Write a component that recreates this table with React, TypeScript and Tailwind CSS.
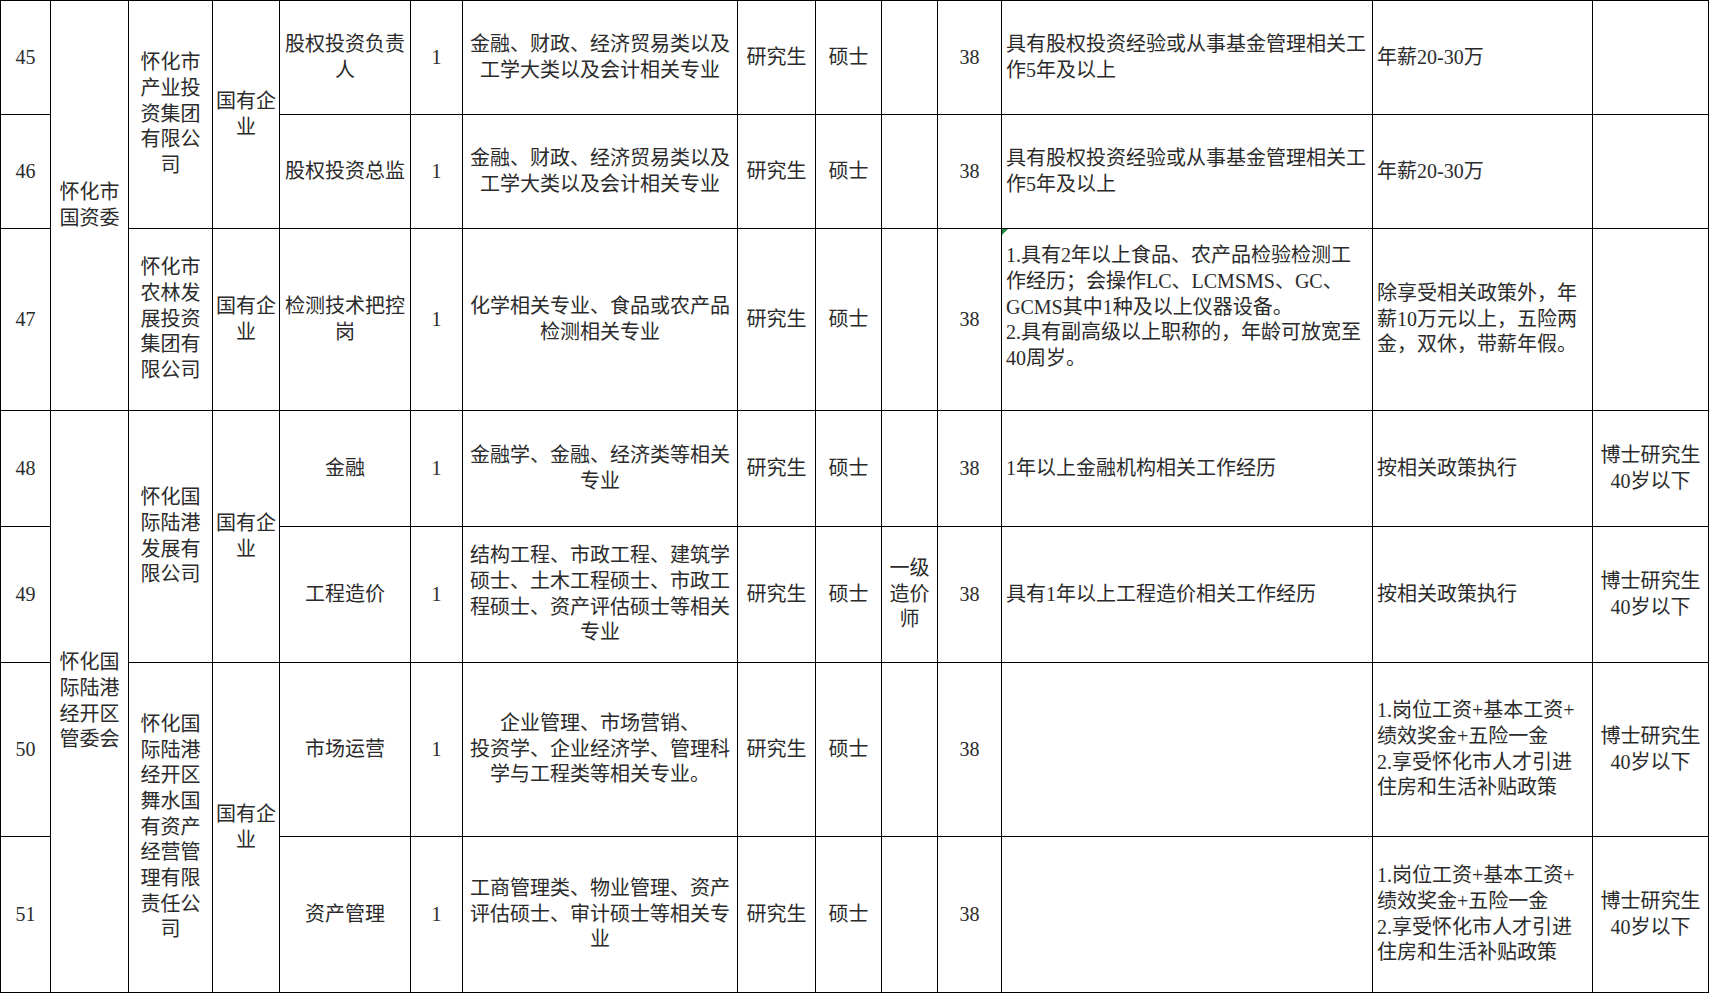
import React from "react";

type Align = "center" | "left";

interface CellProps {
  lines?: string[];
  align?: Align;
  rowSpan?: number;
  className?: string;
  children?: React.ReactNode;
}

function Cell({ lines = [], align = "center", rowSpan, className = "", children }: CellProps) {
  return (
    <td
      rowSpan={rowSpan}
      className={`border border-black align-middle whitespace-nowrap ${
        align === "center" ? "text-center px-[2px]" : "text-left px-[4px]"
      } ${className}`}
    >
      {children}
      {lines.map((l, i) => (
        <div key={i}>{l}</div>
      ))}
    </td>
  );
}

const COLS = [50, 78, 84, 67, 131, 52, 275, 78, 66, 56, 64, 371, 220, 116];

const REQ_45 = ["具有股权投资经验或从事基金管理相关工", "作5年及以上"];
const MAJOR_45 = ["金融、财政、经济贸易类以及", "工学大类以及会计相关专业"];
const PAY_50 = ["1.岗位工资+基本工资+", "绩效奖金+五险一金", "2.享受怀化市人才引进", "住房和生活补贴政策"];
const NOTE_48 = ["博士研究生", "40岁以下"];

export default function App() {
  return (
    <div className="min-h-screen bg-white">
      <table
        className="table-fixed border-collapse border border-black text-[20px] leading-[25.7px] text-[#2b2b2b] font-['Liberation_Serif','Noto_Sans_CJK_SC',serif]"
        style={{ width: 1709 }}
      >
        <colgroup>
          {COLS.map((w, i) => (
            <col key={i} style={{ width: w }} />
          ))}
        </colgroup>
        <tbody>
          {/* 45 */}
          <tr className="h-[114px]">
            <Cell lines={["45"]} />
            <Cell rowSpan={3} lines={["怀化市", "国资委"]} />
            <Cell rowSpan={2} lines={["怀化市", "产业投", "资集团", "有限公", "司"]} />
            <Cell rowSpan={2} lines={["国有企", "业"]} />
            <Cell lines={["股权投资负责", "人"]} />
            <Cell lines={["1"]} />
            <Cell lines={MAJOR_45} />
            <Cell lines={["研究生"]} />
            <Cell lines={["硕士"]} />
            <Cell />
            <Cell lines={["38"]} />
            <Cell align="left" lines={REQ_45} />
            <Cell align="left" lines={["年薪20-30万"]} />
            <Cell />
          </tr>
          {/* 46 */}
          <tr className="h-[114px]">
            <Cell lines={["46"]} />
            <Cell lines={["股权投资总监"]} />
            <Cell lines={["1"]} />
            <Cell lines={MAJOR_45} />
            <Cell lines={["研究生"]} />
            <Cell lines={["硕士"]} />
            <Cell />
            <Cell lines={["38"]} />
            <Cell align="left" lines={REQ_45} />
            <Cell align="left" lines={["年薪20-30万"]} />
            <Cell />
          </tr>
          {/* 47 */}
          <tr className="h-[182px]">
            <Cell lines={["47"]} />
            <Cell lines={["怀化市", "农林发", "展投资", "集团有", "限公司"]} />
            <Cell lines={["国有企", "业"]} />
            <Cell lines={["检测技术把控", "岗"]} />
            <Cell lines={["1"]} />
            <Cell lines={["化学相关专业、食品或农产品", "检测相关专业"]} />
            <Cell lines={["研究生"]} />
            <Cell lines={["硕士"]} />
            <Cell />
            <Cell lines={["38"]} />
            <Cell
              align="left"
              className="relative pb-[24px]"
              lines={[
                "1.具有2年以上食品、农产品检验检测工",
                "作经历；会操作LC、LCMSMS、GC、",
                "GCMS其中1种及以上仪器设备。",
                "2.具有副高级以上职称的，年龄可放宽至",
                "40周岁。",
              ]}
            >
              {/* comment marker */}
              <span className="absolute left-0 top-0 h-0 w-0 border-t-[6px] border-r-[6px] border-t-[#1e8a3c] border-r-transparent" />
            </Cell>
            <Cell
              align="left"
              lines={["除享受相关政策外，年", "薪10万元以上，五险两", "金，双休，带薪年假。"]}
            />
            <Cell />
          </tr>
          {/* 48 */}
          <tr className="h-[116px]">
            <Cell lines={["48"]} />
            <Cell rowSpan={4} lines={["怀化国", "际陆港", "经开区", "管委会"]} />
            <Cell rowSpan={2} lines={["怀化国", "际陆港", "发展有", "限公司"]} />
            <Cell rowSpan={2} lines={["国有企", "业"]} />
            <Cell lines={["金融"]} />
            <Cell lines={["1"]} />
            <Cell lines={["金融学、金融、经济类等相关", "专业"]} />
            <Cell lines={["研究生"]} />
            <Cell lines={["硕士"]} />
            <Cell />
            <Cell lines={["38"]} />
            <Cell align="left" lines={["1年以上金融机构相关工作经历"]} />
            <Cell align="left" lines={["按相关政策执行"]} />
            <Cell lines={NOTE_48} />
          </tr>
          {/* 49 */}
          <tr className="h-[136px]">
            <Cell lines={["49"]} />
            <Cell lines={["工程造价"]} />
            <Cell lines={["1"]} />
            <Cell
              lines={[
                "结构工程、市政工程、建筑学",
                "硕士、土木工程硕士、市政工",
                "程硕士、资产评估硕士等相关",
                "专业",
              ]}
            />
            <Cell lines={["研究生"]} />
            <Cell lines={["硕士"]} />
            <Cell lines={["一级", "造价", "师"]} />
            <Cell lines={["38"]} />
            <Cell align="left" lines={["具有1年以上工程造价相关工作经历"]} />
            <Cell align="left" lines={["按相关政策执行"]} />
            <Cell lines={NOTE_48} />
          </tr>
          {/* 50 */}
          <tr className="h-[174px]">
            <Cell lines={["50"]} />
            <Cell
              rowSpan={2}
              lines={["怀化国", "际陆港", "经开区", "舞水国", "有资产", "经营管", "理有限", "责任公", "司"]}
            />
            <Cell rowSpan={2} lines={["国有企", "业"]} />
            <Cell lines={["市场运营"]} />
            <Cell lines={["1"]} />
            <Cell lines={["企业管理、市场营销、", "投资学、企业经济学、管理科", "学与工程类等相关专业。"]} />
            <Cell lines={["研究生"]} />
            <Cell lines={["硕士"]} />
            <Cell />
            <Cell lines={["38"]} />
            <Cell align="left" />
            <Cell align="left" lines={PAY_50} />
            <Cell lines={NOTE_48} />
          </tr>
          {/* 51 */}
          <tr className="h-[156px]">
            <Cell lines={["51"]} />
            <Cell lines={["资产管理"]} />
            <Cell lines={["1"]} />
            <Cell lines={["工商管理类、物业管理、资产", "评估硕士、审计硕士等相关专", "业"]} />
            <Cell lines={["研究生"]} />
            <Cell lines={["硕士"]} />
            <Cell />
            <Cell lines={["38"]} />
            <Cell align="left" />
            <Cell align="left" lines={PAY_50} />
            <Cell lines={NOTE_48} />
          </tr>
        </tbody>
      </table>
    </div>
  );
}
